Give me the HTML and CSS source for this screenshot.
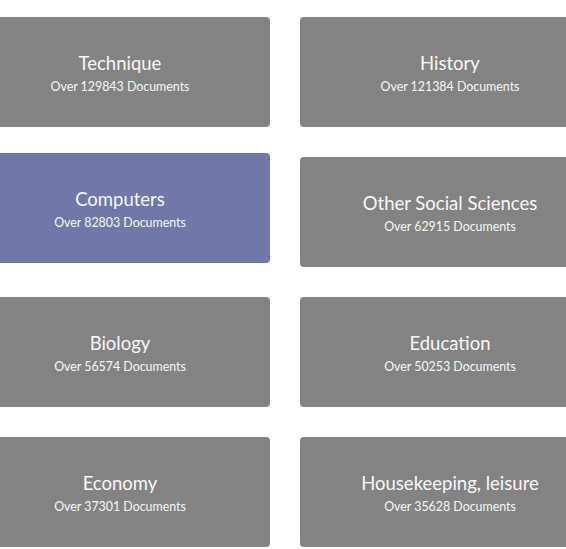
FILE: index.html
```
<!DOCTYPE html>
<html lang="en">
  <head>
    <meta charset="UTF-8" />
    <meta name="viewport" content="width=device-width, initial-scale=1.0" />
    <title>Categories</title>
    <link rel="stylesheet" href="styles.css">
  </head>
  <body>
    <div class="wrapper">
      <div class="categories">
        <a class="category" href="#">
          <span class="title">Technique</span>
          <span class="count">Over 129843 Documents</span>
        </a>
        <a class="category" href="#">
          <span class="title">History</span>
          <span class="count">Over 121384 Documents</span>
        </a>
        <a class="category active" href="#">
          <span class="title">Computers</span>
          <span class="count">Over 82803 Documents</span>
        </a>
        <a class="category" href="#">
          <span class="title">Other Social Sciences</span>
          <span class="count">Over 62915 Documents</span>
        </a>
        <a class="category" href="#">
          <span class="title">Biology</span>
          <span class="count">Over 56574 Documents</span>
        </a>
        <a class="category" href="#">
          <span class="title">Education</span>
          <span class="count">Over 50253 Documents</span>
        </a>
        <a class="category" href="#">
          <span class="title">Economy</span>
          <span class="count">Over 37301 Documents</span>
        </a>
        <a class="category" href="#">
          <span class="title">Housekeeping, leisure</span>
          <span class="count">Over 35628 Documents</span>
        </a>
      </div>
    </div>
  </body>
</html>
```

FILE: styles.css
```
* {
  margin: 0;
  padding: 0;
  box-sizing: border-box;
}
body {
  background: #fff;
  font-family: Lato, "Open Sans", sans-serif;
}
.wrapper {
  width: 100%;
  overflow: hidden;
}
.categories {
  display: grid;
  grid-template-columns: 300px 300px;
  column-gap: 30px;
  row-gap: 30px;
  margin-left: -30px;
  padding-top: 17px;
}
.category {
  display: flex;
  flex-direction: column;
  align-items: center;
  justify-content: center;
  height: 110px;
  padding-top: 5px;
  border-radius: 4px;
  background: #838383;
  color: #f8f8f8;
  text-decoration: none;
}
.category.active {
  background: #6f78a6;
  transform: translateY(-4px);
}
.title {
  font-size: 18.5px;
  line-height: 24px;
}
.count {
  font-size: 12.4px;
  line-height: 23px;
}
```
